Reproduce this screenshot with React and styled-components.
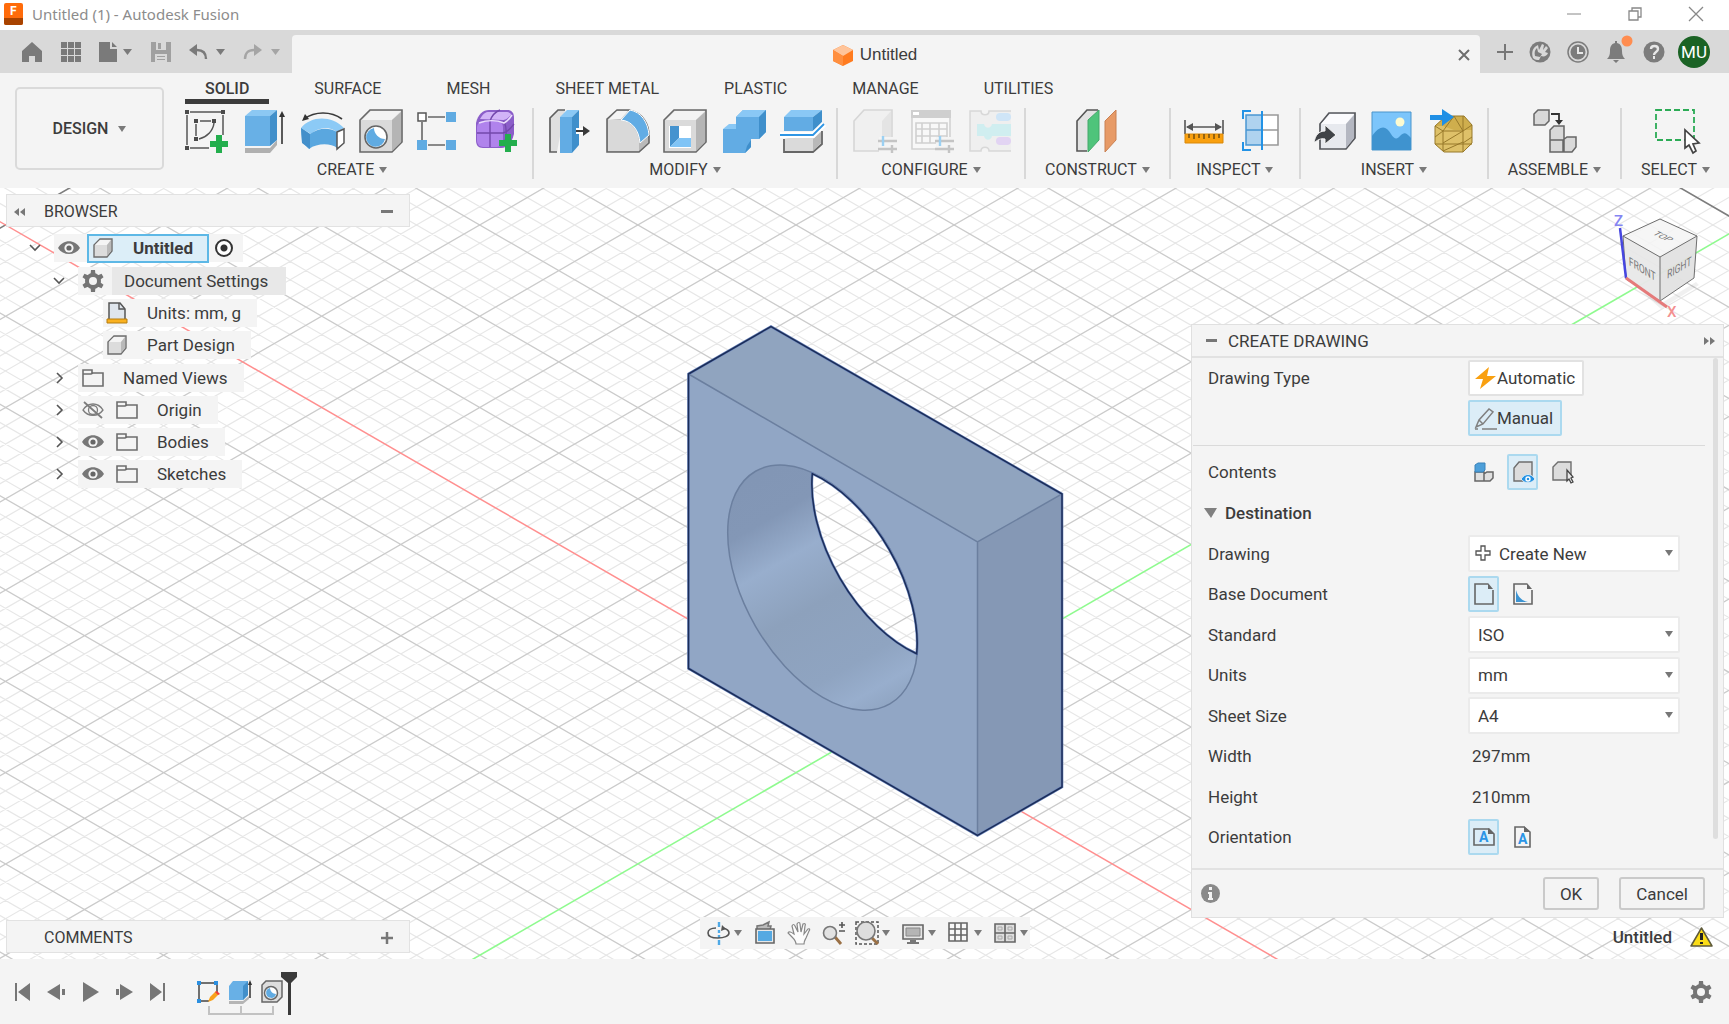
import React, { useState } from "react";
import styled, { createGlobalStyle } from "styled-components";

const GlobalStyle = createGlobalStyle`
  * {
    box-sizing: border-box;
  }
  body {
    margin: 0;
    background: #f4f4f4;
    color: #3c3c3c;
    font-family: Roboto, "Noto Sans", sans-serif;
    font-size: 17px;
  }
  button, select, input {
    font: inherit;
    color: inherit;
  }
  button {
    background: none;
    border: none;
    padding: 0;
    cursor: pointer;
  }
  ul {
    list-style: none;
    margin: 0;
    padding: 0;
  }
  svg {
    display: block;
    flex: none;
    overflow: visible;
  }
`;

const Page = styled.div`
  min-height: 100vh;
  display: flex;
  flex-direction: column;
`;

/* ---------- title bar ---------- */

const TitleBar = styled.header`
  height: 30px;
  display: flex;
  align-items: center;
  padding: 0 26px 3px 4px;
  background: white;
`;

const WindowTitle = styled.span`
  margin-left: 8px;
  flex: 1;
  font-family: "Noto Sans", sans-serif;
  font-size: 15px;
  color: #8c8c8c;
`;

const WindowButtons = styled.div`
  display: flex;
  gap: 47px;
`;

const IconButton = styled.button`
  display: flex;
  align-items: center;
  justify-content: center;
  gap: ${(props) => props.$gap || 6}px;
  color: #808080;
`;

/* ---------- document tabs ---------- */

const TabStrip = styled.div`
  height: 43px;
  display: flex;
  background: #d9d9d9;
`;

const QuickAccess = styled.div`
  width: 292px;
  padding: 0 12px 0 22px;
  display: flex;
  align-items: center;
  justify-content: space-between;
`;

const DocumentTab = styled.div`
  flex: 1;
  margin-top: 5px;
  padding: 2px 10px 0 0;
  display: flex;
  align-items: center;
  background: #f4f4f4;
  border-radius: 4px 4px 0 0;
`;

const DocumentName = styled.div`
  flex: 1;
  display: flex;
  align-items: center;
  justify-content: center;
  gap: 7px;
  font-family: "Liberation Sans", Arial, sans-serif;
  font-size: 17px;
`;

const Account = styled.div`
  padding: 0 19px 0 17px;
  display: flex;
  align-items: center;
  gap: 16px;
`;

const Avatar = styled.button`
  width: 32px;
  height: 32px;
  margin-left: -3px;
  border-radius: 50%;
  background: #1b6325;
  color: white;
  font-size: 17px;
`;

/* ---------- ribbon ---------- */

const Ribbon = styled.div`
  height: 115px;
  display: flex;
  background: #f4f4f4;
`;

const WorkspaceButton = styled.button`
  flex: none;
  width: 149px;
  height: 83px;
  margin: 14px 8px 0 15px;
  display: flex;
  align-items: center;
  justify-content: center;
  gap: 10px;
  border: 2px solid #dadada;
  border-radius: 5px;
  font-size: 16px;
  font-weight: 500;
`;

const RibbonBody = styled.div`
  flex: 1;
  min-width: 0;
`;

const RibbonTabs = styled.nav`
  height: 31px;
  padding-left: 13px;
  display: flex;
  gap: 25px;
`;

const RibbonTab = styled.button`
  padding: 4px 20px 0;
  border-bottom: 5px solid ${(props) => (props.$active ? "#3c3c3c" : "transparent")};
  font-size: 16px;
  font-weight: ${(props) => (props.$active ? 500 : 400)};
  white-space: nowrap;
`;

const Groups = styled.div`
  display: flex;
  padding-top: 4px;
`;

const Group = styled.div`
  height: 71px;
  padding: 1px 13px 0;
  display: flex;
  flex-direction: column;
  align-items: center;
  justify-content: space-between;
  border-right: 2px solid #d8d8d8;
  &:last-child {
    border-right: none;
  }
`;

const Tools = styled.div`
  display: flex;
  gap: 14px;
`;

const Tool = styled.button`
  width: 44px;
  height: 44px;
`;

const GroupLabel = styled.button`
  padding: 0 6px;
  display: flex;
  align-items: center;
  gap: 5px;
  font-size: 16px;
  line-height: 18px;
`;

/* ---------- canvas ---------- */

const Canvas = styled.main`
  position: relative;
  flex: 1;
  min-height: 770px;
  overflow: hidden;
  background: white;
`;

const Scene = styled.svg`
  position: absolute;
  inset: 0;
  width: 100%;
  height: 100%;
`;

const CubeWidget = styled.svg`
  position: absolute;
  top: 24px;
  right: 19px;
`;

const BrowserPanel = styled.section`
  position: absolute;
  top: 6px;
  left: 6px;
  width: 404px;
`;

const PanelBar = styled.div`
  height: 33px;
  padding: 2px 16px 0 7px;
  display: flex;
  align-items: center;
  background: #f4f4f4;
  border: 1px solid #e2e2e2;
  font-size: 16px;
`;

const PanelTitle = styled.span`
  flex: 1;
  margin-left: ${(props) => props.$indent || 19}px;
`;

const CommentsPanel = styled(PanelBar)`
  position: absolute;
  left: 6px;
  bottom: 6px;
  width: 404px;
`;

const Tree = styled.ul`
  padding-top: 5px;
`;

const Branch = styled.ul`
  padding: ${(props) => (props.$nested ? "0 0 1px" : "1px 0 0")};
`;

const TreeRow = styled.div`
  height: 32px;
  padding-left: ${(props) => props.$indent}px;
  display: flex;
  align-items: center;
`;

const Expander = styled.button`
  width: 12px;
  height: 20px;
  margin-right: 13px;
  display: flex;
  align-items: center;
  justify-content: center;
`;

const RowBody = styled.div`
  height: 28px;
  padding: 0 ${(props) => (props.$flush ? 0 : 16)}px 0 4px;
  display: flex;
  align-items: center;
  background: #f4f4f4;
`;

const RowLabel = styled.span`
  margin-left: ${(props) => props.$gap || 20}px;
  white-space: nowrap;
`;

const SettingsLabel = styled.span`
  height: 28px;
  margin-left: 8px;
  padding: 0 18px 0 12px;
  line-height: 28px;
  background: #e8e8e8;
`;

const RootName = styled.button`
  height: 29px;
  margin: 0 6px 0 7px;
  padding: 0 14px 0 4px;
  display: flex;
  align-items: center;
  gap: 20px;
  border: 2px solid #5db8e6;
  background: #dceef8;
  font-weight: 700;
`;

const ActiveRadio = styled.input`
  appearance: none;
  width: 18px;
  height: 18px;
  margin: 0 10px 0 0;
  border: 2px solid #333;
  border-radius: 50%;
  background: radial-gradient(circle, #333 3px, white 4px);
`;

const Gap = styled.span`
  width: ${(props) => props.$size}px;
`;

const NavBar = styled.div`
  position: absolute;
  left: 50%;
  bottom: 10px;
  transform: translateX(-50%);
  height: 32px;
  padding: 0 2px 0 8px;
  display: flex;
  align-items: center;
  gap: 12px;
  background: #f4f4f4;
`;

const DocumentStatus = styled.div`
  position: absolute;
  right: 16px;
  bottom: 12px;
  display: flex;
  align-items: center;
  gap: 18px;
  font-weight: 500;
`;

/* ---------- create drawing dialog ---------- */

const Dialog = styled.section`
  position: absolute;
  top: 136px;
  right: 5px;
  width: 533px;
  background: #f4f4f4;
  border: 1px solid #e0e0e0;
`;

const DialogHeader = styled.div`
  height: 33px;
  padding: 1px 8px 0 14px;
  display: flex;
  align-items: center;
  border-bottom: 2px solid #e2e2e2;
`;

const DialogBody = styled.div`
  display: flex;
  justify-content: space-between;
  padding: 0 5px 11px 1px;
`;

const Form = styled.form`
  width: 512px;
`;

const Scrollbar = styled.div`
  width: 5px;
  height: 481px;
  border-radius: 3px;
  background: #dedede;
`;

const TypeRow = styled.div`
  padding: 2px 0 9px 15px;
  margin-bottom: 6px;
  display: flex;
  border-bottom: 1px solid #dadada;
`;

const TypeOptions = styled.div`
  display: flex;
  flex-direction: column;
  align-items: flex-start;
  gap: 4px;
`;

const Field = styled.div`
  height: ${(props) => (props.$tall ? 41 : 40)}px;
  padding-left: 15px;
  display: flex;
  align-items: center;
`;

const FieldName = styled.label`
  width: 260px;
  line-height: 36px;
`;

const TypeButton = styled.button`
  height: 36px;
  padding: 0 7px 0 4px;
  display: flex;
  align-items: center;
  border: 2px solid ${(props) => (props.$on ? "#abd9ef" : "#e2e2e2")};
  border-radius: 2px;
  background: ${(props) => (props.$on ? "#dcedf7" : "white")};
`;

const Toggles = styled.div`
  display: flex;
  gap: 8px;
`;

const Toggle = styled.button`
  width: 31px;
  height: 36px;
  display: flex;
  align-items: center;
  justify-content: center;
  border: 2px solid ${(props) => (props.$on ? "#abd9ef" : "transparent")};
  border-radius: 2px;
  background: ${(props) => (props.$on ? "#dcedf7" : "transparent")};
`;

const SelectBox = styled.div`
  position: relative;
  width: 212px;
`;

const SelectInput = styled.select`
  appearance: none;
  width: 100%;
  height: 37px;
  padding-left: ${(props) => (props.$withIcon ? 29 : 8)}px;
  border: 2px solid #ebebeb;
  border-radius: 2px;
  background: white;
`;

const SelectIcon = styled.span`
  position: absolute;
  top: 10px;
  left: 7px;
  pointer-events: none;
`;

const SelectArrow = styled.span`
  position: absolute;
  top: 15px;
  right: 7px;
  pointer-events: none;
`;

const SectionToggle = styled.button`
  height: 41px;
  padding-left: 11px;
  display: flex;
  align-items: center;
  gap: 8px;
  font-weight: 500;
`;

const ReadOnly = styled.span`
  padding-left: 4px;
`;

const DialogFooter = styled.div`
  height: 49px;
  padding: 0 18px 0 9px;
  display: flex;
  align-items: center;
  gap: 20px;
  border-top: 2px solid #e2e2e2;
`;

const FooterFill = styled.span`
  flex: 1;
`;

const DialogButton = styled.button`
  height: 33px;
  padding: 0 15px;
  border: 2px solid #cacaca;
  border-radius: 3px;
`;

/* ---------- timeline ---------- */

const Timeline = styled.footer`
  height: 65px;
  padding: 0 17px 0 14px;
  display: flex;
  align-items: center;
  background: #f4f4f4;
`;

const Playback = styled.div`
  display: flex;
  gap: 16px;
  margin-right: 29px;
`;

const Features = styled.div`
  flex: 1;
`;

/* ---------- icons ---------- */

const Svg = ({ w, h, children, ...rest }) => (
  <svg width={w} height={h || w} viewBox={`0 0 ${w} ${h || w}`} fill="none" aria-hidden="true" {...rest}>
    {children}
  </svg>
);

const Caret = ({ w = 10, color = "#7a7a7a" }) => (
  <Svg w={w} h={6}>
    <path d={`M0 0H${w}L${w / 2} 6Z`} fill={color} />
  </Svg>
);

const PlusBadge = ({ x, y }) => (
  <path d={`M${x - 3} ${y - 9}h6v6h6v6h-6v6h-6v-6h-6v-6h6z`} fill="#23ae4d" />
);

const SmallCube = ({ w = 20 }) => (
  <svg width={w} height={w} viewBox="0 0 20 20" fill="none" aria-hidden="true">
    <path d="M1 19V7l6-6h12v12l-5 6z" fill="#dcdcdc" stroke="#6e6e6e" strokeWidth="1.4" />
    <path d="M7 2h11l-4 5H2z" fill="#f4f4f4" />
    <path d="M18 2v11l-4 5V7z" fill="#b9b9b9" />
  </svg>
);

const Folder = () => (
  <Svg w={22} h={18}>
    <path d="M1 17V1h9v3h11v13z" stroke="#6e6e6e" strokeWidth="1.6" />
    <path d="M1 5h8l2-1" stroke="#6e6e6e" strokeWidth="1.4" />
  </Svg>
);

const Eye = ({ off }) => (
  <Svg w={22} h={16}>
    {off ? (
      <g stroke="#7c7c7c" strokeWidth="1.3">
        <path d="M1 8c5-8 15-8 20 0-5 7-15 7-20 0z" />
        <circle cx="11" cy="8" r="4.5" />
        <path d="M2 0l18 16" strokeWidth="1.8" />
      </g>
    ) : (
      <>
        <path d="M0 8c5-9 17-9 22 0-5 8-17 8-22 0z" fill="#777" />
        <circle cx="11" cy="8" r="4.6" fill="#f4f4f4" />
        <circle cx="11" cy="8" r="2.6" fill="#666" />
      </>
    )}
  </Svg>
);

const Gear = ({ w = 22 }) => (
  <svg width={w} height={w} viewBox="0 0 22 22" aria-hidden="true">
    {[0, 60, 120].map((a) => (
      <path key={a} d="M8.500 5L9 0h4l.5 5v12L13 22H9l-.5-5z" fill="#757575" transform={`rotate(${a} 11 11)`} />
    ))}
    <circle cx="11" cy="11" r="8" fill="#757575" />
    <circle cx="11" cy="11" r="4" fill="#f4f4f4" />
  </svg>
);

const Chevron = ({ open }) => (
  <Svg w={10}>
    <path d={open ? "M0 2l5 5 5-5" : "M3 0l5 5-5 5"} stroke="#555" strokeWidth="1.6" />
  </Svg>
);

const SketchIcon = () => (
  <Svg w={44}>
    <path d="M5 3h31M38 6v20M2 6v30M5 39h19M11 15v12M15 12h11M29 14c-1 8-7 14-15 16" stroke="#555" strokeWidth="1.5" />
    <path d="M0 1h4v4H0zM36 1h4v4h-4zM0 37h4v4H0zM9 10h4v4H9zM27 10h4v4h-4zM9 28h4v4H9z" fill="#4b4b4b" />
    <PlusBadge x={34} y={35} />
  </Svg>
);

const ExtrudeIcon = () => (
  <Svg w={44}>
    <path d="M2 39h25l7-8v5l-7 8H2z" fill="#b0b0b0" />
    <path d="M2 37V7h25v30z" fill="#68b0e6" />
    <path d="M2 7l7-6h25l-7 6z" fill="#8cc8f3" />
    <path d="M27 7l7-6v30l-7 6z" fill="#418fca" />
    <path d="M39 35V4" stroke="#333" strokeWidth="1.6" />
    <path d="M39 2l3 6h-6z" fill="#333" />
  </Svg>
);

const RevolveIcon = () => (
  <Svg w={44}>
    <path d="M0 19C10 7 30 6 43 19l-7 4c-8-6-18-5-26 2z" fill="#8ccaf6" />
    <path d="M0 19l9 6c9-6 18-7 27-2v16c-6-5-20-5-28 1L1 33z" fill="#5aa7df" />
    <path d="M0 19l9 6v15l-8-6z" fill="#438fca" />
    <path d="M36 23l7-3v14l-7 6z" fill="white" stroke="#555" strokeWidth="1.5" />
    <path d="M3 10C14 2 30 2 41 10" stroke="#3a3a3a" strokeWidth="1.7" />
    <path d="M1 12l3-7 4 5z" fill="#333" />
  </Svg>
);

const GrayCube = ({ stroke = "#686868" }) => (
  <>
    <path d="M1 43V11L11 1h32v32L33 43z" fill="#dadada" stroke={stroke} strokeWidth="1.6" />
    <path d="M12 2h30l-9 9H3z" fill="#f3f3f3" />
    <path d="M42 3v30l-9 9V11z" fill="#b5b5b5" />
  </>
);

const HoleIcon = () => (
  <Svg w={44}>
    <GrayCube />
    <circle cx="17" cy="28" r="11" fill="white" stroke="#666" strokeWidth="1.6" />
    <path d="M15 19a9.500 9.500 0 1 0 11 11c-6 0-11-5-11-11z" fill="#60abe2" />
  </Svg>
);

const PatternIcon = () => (
  <Svg w={44}>
    <path d="M11 8h17M5 13v18M11 36h17" stroke="#666" strokeWidth="1.6" />
    <path d="M1 4h8v8H1z" fill="white" stroke="#555" strokeWidth="1.5" />
    <path d="M29 3h10v10H29zM0 31h10v10H0zM29 31h10v10H29z" fill="#60abe2" />
  </Svg>
);

const FormIcon = () => (
  <Svg w={44}>
    <path d="M1 14C3 5 8 1 14 1h18c5 0 7 3 7 8v16c-2 9-7 14-13 14H8c-5 0-7-3-7-8z" fill="#8b5ec9" />
    <rect x="2" y="12" width="26" height="26" rx="6" fill="#b083ec" />
    <path d="M5 10C9 3 11 3 16 3h15c3 0 5 1 5 3-4 4-6 5-8 5z" fill="#d1b3f7" />
    <path d="M15 12v26M2 24h26c5-1 8-5 11-9M15 12c2-6 5-9 10-11M29 12c3 7 3 15 0 24" stroke="#7348ab" strokeWidth="1.4" />
    <path d="M4 14c8-3 18-3 25 0 4-2 6-5 8-8" stroke="#eadcfc" strokeWidth="1.6" />
    <PlusBadge x={33} y={34} />
  </Svg>
);

const PressPullIcon = () => (
  <Svg w={44}>
    <path d="M10 43H3V9l8-8h7" fill="#dfdfdf" stroke="#5f5f5f" strokeWidth="1.7" />
    <path d="M13 8h12v36H13z" fill="#62ace4" />
    <path d="M13 8l7-7h12l-7 7z" fill="#8ac8f5" />
    <path d="M25 8l7-7v35l-7 8z" fill="#3f8fcb" />
    <path d="M29 22h9" stroke="white" strokeWidth="6" />
    <path d="M29 22h10" stroke="#3a3a3a" strokeWidth="2" />
    <path d="M36 17l7 5-7 5z" fill="#3a3a3a" />
  </Svg>
);

const FilletIcon = () => (
  <Svg w={44}>
    <path d="M2 43V10l10-9h12c14 3 20 14 20 26v7l-10 9z" fill="#b9b9b9" stroke="#666" strokeWidth="1.6" />
    <path d="M3 42V11h12c11 1 18 10 19 21v10z" fill="#d9d9d9" />
    <path d="M3 11l9-9h11l-7 8z" fill="#f4f4f4" />
    <path d="M16 11l9-10c11 2 18 12 19 25l-9 8C34 21 27 12 16 11z" fill="#62ace4" stroke="white" />
  </Svg>
);

const ShellIcon = () => (
  <Svg w={44}>
    <GrayCube />
    <path d="M6 17h22v22H6z" fill="white" />
    <path d="M7 17h9v12l-9 9z" fill="#4593cf" />
    <path d="M16 29h12v9H7z" fill="#80c4f6" />
  </Svg>
);

const CombineIcon = () => (
  <Svg w={44}>
    <path d="M2 20h13V8l7-7h23v22l-7 7h-8v8l-6 6H2z" fill="#62ace4" />
    <path d="M15 8l7-7h23l-7 7zM2 20l6-5h7v5z" fill="#8ac8f5" />
    <path d="M38 8l7-7v22l-7 7zM26 37l4-6v7l-6 6z" fill="#3f8fcb" />
  </Svg>
);

const SplitIcon = () => (
  <Svg w={44}>
    <path d="M5 8h29v14H5z" fill="#62ace4" />
    <path d="M5 8l7-7h31l-9 7z" fill="#8ac8f5" />
    <path d="M34 8l9-7v13l-9 8z" fill="#3f8fcb" />
    <path d="M5 30v13h29l9-8V22" fill="#dadada" stroke="#666" strokeWidth="1.8" />
    <path d="M34 30l8-7v11l-8 8z" fill="#b9b9b9" />
    <path d="M1 26h33L45 15" stroke="white" strokeWidth="6" />
    <path d="M1 26h33L45 15" stroke="#2f96e4" strokeWidth="1.800" />
  </Svg>
);

const Sliders = ({ x, y }) => (
  <g strokeWidth="2.4" stroke="#c4c4c4">
    <path d={`M${x} ${y}h19M${x} ${y + 8}h19M${x + 14} ${y + 4}v8`} />
    <path d={`M${x + 5} ${y - 5}v10`} stroke="#9bd0f2" />
  </g>
);

const ConfigureIcon = () => (
  <Svg w={44}>
    <path d="M29 42H3V12L13 1h28v27" fill="#f0f0f0" stroke="#d6d6d6" strokeWidth="1.6" />
    <path d="M40 2v26l-9 4V12z" fill="#e4e4e4" />
    <path d="M28 28h18v15H28z" fill="#f4f4f4" />
    <Sliders x={27} y={32} />
  </Svg>
);

const ConfigTableIcon = () => (
  <Svg w={44}>
    <path d="M3 2h38v38H3z" fill="#f8f8f8" stroke="#d2d2d2" strokeWidth="1.6" />
    <path d="M2 1h40v8H2z" fill="#cfcfcf" />
    <path d="M4 3h6v3H4z" fill="white" />
    <path d="M7 14h31v20H7zM7 20h31M7 27h31M13 14v20M21 14v20M30 14v20" stroke="#d0d0d0" strokeWidth="1.6" />
    <path d="M27 28h18v15H27z" fill="#f4f4f4" />
    <Sliders x={26} y={32} />
  </Svg>
);

const ConfigRulesIcon = () => (
  <Svg w={44}>
    <path d="M44 2H22c0 5-8 5-8 0H3v40h11c0-5 8-5 8 0h22" fill="#efefef" stroke="#d8d8d8" strokeWidth="1.5" />
    <path d="M10 15h7c1 5 7 5 8 0h19v12H25c-1 5-7 5-8 0h-7z" fill="#d0eef0" />
    <rect x="29" y="4" width="15" height="8" rx="4" fill="#cfe5f7" />
    <rect x="29" y="28" width="15" height="8" rx="4" fill="#e2d4f3" />
  </Svg>
);

const PlaneIcon = () => (
  <Svg w={44}>
    <path d="M12 42H2V12L12 1h11" fill="#e3e3e3" stroke="#555" strokeWidth="1.6" />
    <path d="M13 11L24 1v30L13 43z" fill="#4fc47b" stroke="#45a86b" />
    <path d="M30 12L41 1v30L30 43z" fill="#e79a66" stroke="#c98052" />
  </Svg>
);

const MeasureIcon = () => (
  <Svg w={44}>
    <path d="M1 11v14M39 11v14M3 18h34" stroke="#555" strokeWidth="1.6" />
    <path d="M2 18l7-4v8zM38 18l-7-4v8z" fill="#555" />
    <path d="M1 25h38v9H1z" fill="#f9a00f" stroke="#d98808" />
    <path d="M5 25v4M10 25v5M15 25v4M20 25v5M25 25v4M30 25v5M35 25v4" stroke="#6d4a10" strokeWidth="1.4" />
  </Svg>
);

const SectionIcon = () => (
  <Svg w={44}>
    <path d="M4 6h15v30H4z" fill="#afd3ef" />
    <path d="M21 6h15v30H21M21 21h15" fill="white" stroke="#999" strokeWidth="1.6" />
    <path d="M19 6H4v30h15M4 21h15" stroke="#4a97d2" strokeWidth="1.5" />
    <path d="M20 2v39M9 2H1v8M9 41H1v-8" stroke="#2393e6" strokeWidth="2" />
  </Svg>
);

const InsertIcon = () => (
  <Svg w={44}>
    <path d="M6 40V15L15 4h26v25l-9 11z" fill="#e7e9ee" stroke="#55575c" strokeWidth="1.7" />
    <path d="M16 5h24l-8 10H7z" fill="#fbfbfd" />
    <path d="M40 6v23l-8 10V15z" fill="#b4b7c1" />
    <path d="M0 34c1-8 5-12 11-12v-6l11 10-11 9v-5c-4-1-8 1-11 4z" fill="#404347" stroke="#f4f4f4" />
  </Svg>
);

const CanvasIcon = () => (
  <Svg w={44}>
    <path d="M0 3h39v38H0z" fill="#7cc5fb" stroke="#4b95cc" />
    <path d="M0 27c8-11 14-11 19-2 3 5 6 6 9 2 4-4 6-4 11 2v12H0z" fill="#3f93cf" />
    <circle cx="28" cy="13" r="4.500" fill="#fdfbd0" />
  </Svg>
);

const MeshIcon = () => (
  <Svg w={44}>
    <path d="M5 17l11-10h18l8 9v18l-9 9H14l-9-8z" fill="#cfae4d" />
    <path d="M5 17h8l11 4h18v14l-9 8H14l-9-8z" fill="#dec169" />
    <path d="M5 17l8 5h20l9-6M13 22v20M33 22v21M5 35h37M13 34l20-12M13 42l20-9M33 22L24 7 13 22M33 7v15M5 28l8-6M42 28l-9 6M5 17l11-10h18l8 9v18l-9 9H14l-9-8z" stroke="#97792a" strokeWidth="1" />
    <path d="M0 6h12V0l12 8-12 9v-6H0z" fill="#1f8fe5" />
  </Svg>
);

const AssembleIcon = () => (
  <Svg w={44}>
    <g fill="#d9d9d9" stroke="#666" strokeWidth="1.5">
      <path d="M2 16V5l4-4h11v11l-4 4z" />
      <path d="M18 30V21l4-4h10v26H18zM31 43V31l4-3h9v10l-4 5zM18 31h13v12H18z" />
    </g>
    <path d="M19 5h8v7" stroke="#333" strokeWidth="1.8" />
    <path d="M27 16l-4-5h8z" fill="#333" />
  </Svg>
);

const SelectToolIcon = () => (
  <Svg w={44}>
    <path d="M2 1h38v30H2z" stroke="#2bab55" strokeWidth="1.800" strokeDasharray="6 3" />
    <path d="M31 21v18l4-3 4 8 3-2-3-7 6-1z" fill="white" stroke="#444" strokeWidth="1.7" />
  </Svg>
);

const ribbonGroups = [
  {
    label: "CREATE",
    tools: [
      ["Create Sketch", SketchIcon],
      ["Extrude", ExtrudeIcon],
      ["Revolve", RevolveIcon],
      ["Hole", HoleIcon],
      ["Rectangular Pattern", PatternIcon],
      ["Create Form", FormIcon],
    ],
  },
  {
    label: "MODIFY",
    tools: [
      ["Press Pull", PressPullIcon],
      ["Fillet", FilletIcon],
      ["Shell", ShellIcon],
      ["Combine", CombineIcon],
      ["Split Body", SplitIcon],
    ],
  },
  {
    label: "CONFIGURE",
    tools: [
      ["Configure", ConfigureIcon],
      ["Configuration Table", ConfigTableIcon],
      ["Configuration Rules", ConfigRulesIcon],
    ],
  },
  { label: "CONSTRUCT", tools: [["Offset Plane", PlaneIcon]] },
  {
    label: "INSPECT",
    tools: [
      ["Measure", MeasureIcon],
      ["Section Analysis", SectionIcon],
    ],
  },
  {
    label: "INSERT",
    tools: [
      ["Insert Derive", InsertIcon],
      ["Canvas", CanvasIcon],
      ["Insert Mesh", MeshIcon],
    ],
  },
  { label: "ASSEMBLE", tools: [["New Component", AssembleIcon]] },
  { label: "SELECT", tools: [["Select", SelectToolIcon]] },
];

const ribbonTabs = ["SOLID", "SURFACE", "MESH", "SHEET METAL", "PLASTIC", "MANAGE", "UTILITIES"];

/* ---------- viewport drawing ---------- */

const ORIGIN = { x: 875, y: 727 };
const SLOPE = 0.5774;
const STEP = 18.256;

const gridLine = (offset, dir) => {
  const y = (x) => ORIGIN.y + offset * STEP + dir * SLOPE * (x - ORIGIN.x);
  return `M-20 ${y(-20).toFixed(1)}L1750 ${y(1750).toFixed(1)}`;
};

const range = Array.from({ length: 111 }, (_, i) => i - 55);
const minorPath = range
  .filter((n) => n % 5 !== 0)
  .map((n) => gridLine(n, 1) + gridLine(n, -1))
  .join("");
const majorPath = range
  .filter((n) => n % 5 === 0 && Math.abs(n) !== 55 && n !== 0)
  .map((n) => gridLine(n, 1) + gridLine(n, -1))
  .join("");

const windowPath =
  "M812.300 473.600A134.350 77.570 60 0 0 916.700 653.800A134.350 77.570 60 0 0 812.300 473.600Z";
const outline = "M688.500 374L771 326.500L1062 494V787L977.500 835.500L688.500 668.500Z";

const Viewport = () => (
  <Scene viewBox="0 188 1729 771" preserveAspectRatio="xMidYMid slice" fill="none" aria-label="Model view">
    <defs>
      <linearGradient
        id="wall"
        gradientUnits="userSpaceOnUse"
        x1="745"
        y1="483"
        x2="880"
        y2="717"
        gradientTransform="rotate(-60 822.700 587.600)"
      >
        <stop offset="0" stopColor="#8296b5" />
        <stop offset="0.16" stopColor="#8397b6" />
        <stop offset="0.32" stopColor="#98aecd" />
        <stop offset="0.52" stopColor="#8da1bc" />
        <stop offset="0.78" stopColor="#8fa4c1" />
        <stop offset="0.9" stopColor="#98aecd" />
        <stop offset="1" stopColor="#8ea3c0" />
      </linearGradient>
      <clipPath id="body">
        <path d={outline + windowPath} clipRule="evenodd" />
      </clipPath>
    </defs>
    <path d={minorPath} stroke="#e7e7e7" strokeWidth="1.2" />
    <path d={majorPath} stroke="#cbcbcb" strokeWidth="1.3" />
    <path d={gridLine(-55, 1) + gridLine(-55, -1)} stroke="#7d7d7d" strokeWidth="1.6" />
    <path d={gridLine(0, 1)} stroke="#ff8f8f" strokeWidth="1.5" />
    <path d={gridLine(0, -1)} stroke="#8ffa8f" strokeWidth="1.6" />
    <g clipPath="url(#body)">
      <path d={outline} fill="#91a6c5" />
      <path d="M688.500 374L771 326.500L1062 494L977.500 542Z" fill="#90a4bf" />
      <path d="M977.500 542L1062 494V787L977.500 835.500Z" fill="#8598b5" />
      <path d="M688.500 374L977.500 542L1062 494M977.500 542V835" stroke="#6b7f9f" strokeWidth="1.5" />
      <ellipse
        cx="822.700"
        cy="587.600"
        rx="134.350"
        ry="77.570"
        transform="rotate(60 822.700 587.600)"
        fill="url(#wall)"
        stroke="#6b7f9f"
        strokeWidth="1.5"
      />
    </g>
    <path d={outline + windowPath} stroke="#6c86bd" strokeWidth="2.6" />
    <path d={outline + windowPath} stroke="#1b2d58" strokeWidth="1.5" />
  </Scene>
);

const ViewCube = () => (
  <CubeWidget width="96" height="108" viewBox="1614 212 96 108" fill="none" aria-label="View cube">
    <path d="M1632 283l28 21 36-22 3 3-38 24z" fill="#000" opacity="0.06" />
    <path d="M1660 219L1697 236L1694 278L1660 301L1626 279L1623 236Z" fill="#f4f4f4" fillOpacity="0.85" />
    <path d="M1660 257L1697 236L1694 278L1660 301Z" fill="#dcdcdc" fillOpacity="0.7" />
    <path d="M1660 257L1623 236L1626 279L1660 301Z" fill="#e4e4e4" fillOpacity="0.7" />
    <path d="M1660 219L1697 236L1694 278L1660 301L1626 279L1623 236ZM1623 236L1660 257L1697 236M1660 257V301" stroke="#6e6e6e" />
    <path d="M1620 228L1626 278" stroke="#4646e0" strokeWidth="2.5" />
    <path d="M1626 278L1667 307" stroke="#e57a7a" strokeWidth="3" />
    <g fontFamily="Roboto, sans-serif" fontSize="10" fill="#777">
      <text transform="matrix(0.85 0.52 0.04 1.2 1629 265)">FRONT</text>
      <text transform="matrix(0.85 -0.5 -0.04 1.2 1667 279)">RIGHT</text>
      <text transform="matrix(0.86 0.42 -0.86 0.42 1652 234)">TOP</text>
    </g>
    <g fontFamily="Roboto, sans-serif" fontSize="15" fontWeight="500">
      <text x="1614" y="226" fill="#8585f2">Z</text>
      <text x="1667" y="317" fill="#f39090">X</text>
    </g>
  </CubeWidget>
);

/* ---------- parts ---------- */

const DropDown = ({ id, options, icon }) => (
  <SelectBox>
    <SelectInput id={id} $withIcon={Boolean(icon)}>
      {options.map((o) => (
        <option key={o}>{o}</option>
      ))}
    </SelectInput>
    {icon && <SelectIcon>{icon}</SelectIcon>}
    <SelectArrow>
      <Caret w={8} color="#777" />
    </SelectArrow>
  </SelectBox>
);

const ToggleGroup = ({ label, initial, items }) => {
  const [selected, setSelected] = useState(initial);
  return (
    <Toggles role="group" aria-labelledby={label}>
      {items.map(([name, icon], i) => (
        <Toggle
          key={name}
          type="button"
          aria-label={name}
          aria-pressed={selected === i}
          $on={selected === i}
          onClick={() => setSelected(i)}
        >
          {icon}
        </Toggle>
      ))}
    </Toggles>
  );
};

const Sheet = ({ curve }) => (
  <Svg w={20} h={22}>
    <path d="M14 1H1v20h18V7" stroke="#666" strokeWidth="1.600" />
    <path d="M14 0v6h5z" fill="#666" />
    {curve && <path d="M3 7c2 7 6 11 12 12H3z" fill="#3d94d2" />}
  </Svg>
);

const Landscape = () => (
  <Svg w={22} h={18}>
    <path d="M1 1h15l5 5v11H1z" stroke="#666" strokeWidth="1.600" />
    <path d="M15 0v6h6z" fill="#666" />
    <text x="6" y="14" fontSize="14" fontWeight="700" fill="#2b95e6">A</text>
  </Svg>
);

const Portrait = () => (
  <Svg w={17} h={22}>
    <path d="M1 1h9l6 5v15H1z" stroke="#666" strokeWidth="1.600" />
    <path d="M10 0v6h6z" fill="#666" />
    <text x="4" y="18" fontSize="14" fontWeight="700" fill="#2b95e6">A</text>
  </Svg>
);

const CreateDrawing = () => {
  const [type, setType] = useState("Manual");
  return (
    <Dialog aria-label="Create drawing">
      <DialogHeader>
        <IconButton aria-label="Collapse">
          <Svg w={12} h={4}><path d="M0 0h11v3H0z" fill="#777" /></Svg>
        </IconButton>
        <PanelTitle $indent={10}>CREATE DRAWING</PanelTitle>
        <IconButton aria-label="Dock">
          <Svg w={11} h={8}><path d="M0 0l5 4-5 4zM6 0l5 4-5 4z" fill="#777" /></Svg>
        </IconButton>
      </DialogHeader>
      <DialogBody>
        <Form onSubmit={(e) => e.preventDefault()}>
          <TypeRow>
            <FieldName as="span">Drawing Type</FieldName>
            <TypeOptions>
              <TypeButton type="button" $on={type === "Automatic"} onClick={() => setType("Automatic")}>
                <Svg w={23}><path d="M15 0L1 12h8L6 22 22 9h-9z" fill="#f9a010" /></Svg>
                Automatic
              </TypeButton>
              <TypeButton type="button" $on={type === "Manual"} onClick={() => setType("Manual")}>
                <Svg w={23}>
                  <path d="M2 20l3-7L15 2l4 3L9 17zM5 13l4 4M1 22h3M8 22h15" stroke="#808080" strokeWidth="1.5" />
                </Svg>
                Manual
              </TypeButton>
            </TypeOptions>
          </TypeRow>
          <Field>
            <FieldName as="span" id="contents">Contents</FieldName>
            <ToggleGroup
              label="contents"
              initial={1}
              items={[
                ["Full Assembly", (
                  <Svg w={20}>
                    <path d="M1 10h9v9H1zM10 19v-7l3-2h6v6l-3 3z" fill="#e0e0e0" stroke="#666" strokeWidth="1.5" />
                    <path d="M1 10V3l3-2h7v7l-2 2z" fill="#4d9fd9" stroke="#3b83ba" />
                  </Svg>
                )],
                ["Visible Only", (
                  <Svg w={20} h={22}>
                    <path d="M1 20V7l5-6h13v14l-5 5z" fill="#dcdcdc" stroke="#6e6e6e" strokeWidth="1.4" />
                    <path d="M8 18c4-6 10-6 14 0-4 5-10 5-14 0z" fill="#2492e3" stroke="#dcedf7" />
                    <circle cx="15" cy="18" r="2" stroke="white" strokeWidth="1.4" />
                  </Svg>
                )],
                ["Select", (
                  <Svg w={20} h={22}>
                    <path d="M1 19V6l5-5h13v13l-4 5z" fill="#dcdcdc" stroke="#6e6e6e" strokeWidth="1.4" />
                    <path d="M15 9v11l2-2 2 4 2-1-2-4 2-1z" fill="#e8e8e8" stroke="#444" strokeWidth="1.3" />
                  </Svg>
                )],
              ]}
            />
          </Field>
          <SectionToggle type="button">
            <Svg w={13} h={10}><path d="M0 0h13L7 10z" fill="#808080" /></Svg>
            Destination
          </SectionToggle>
          <Field $tall>
            <FieldName htmlFor="drawing">Drawing</FieldName>
            <DropDown
              id="drawing"
              options={["Create New"]}
              icon={
                <Svg w={16}>
                  <path d="M6 1h4v5h5v4h-5v5H6v-5H1V6h5z" stroke="#555" strokeWidth="1.3" />
                </Svg>
              }
            />
          </Field>
          <Field>
            <FieldName as="span" id="base">Base Document</FieldName>
            <ToggleGroup label="base" initial={0} items={[["Blank", <Sheet />], ["From Template", <Sheet curve />]]} />
          </Field>
          <Field $tall>
            <FieldName htmlFor="standard">Standard</FieldName>
            <DropDown id="standard" options={["ISO", "ASME"]} />
          </Field>
          <Field>
            <FieldName htmlFor="units">Units</FieldName>
            <DropDown id="units" options={["mm", "in"]} />
          </Field>
          <Field $tall>
            <FieldName htmlFor="sheet">Sheet Size</FieldName>
            <DropDown id="sheet" options={["A4", "A3", "A2"]} />
          </Field>
          <Field>
            <FieldName as="span">Width</FieldName>
            <ReadOnly>297mm</ReadOnly>
          </Field>
          <Field $tall>
            <FieldName as="span">Height</FieldName>
            <ReadOnly>210mm</ReadOnly>
          </Field>
          <Field>
            <FieldName as="span" id="orientation">Orientation</FieldName>
            <ToggleGroup label="orientation" initial={0} items={[["Landscape", <Landscape />], ["Portrait", <Portrait />]]} />
          </Field>
        </Form>
        <Scrollbar />
      </DialogBody>
      <DialogFooter>
        <IconButton aria-label="Info">
          <Svg w={19}>
            <circle cx="9.500" cy="9.500" r="9.500" fill="#8a8a8a" />
            <path d="M8 3h3v3H8zM7 8h4v6h1v2H7v-2h1v-4H7z" fill="#f4f4f4" />
          </Svg>
        </IconButton>
        <FooterFill />
        <DialogButton>OK</DialogButton>
        <DialogButton>Cancel</DialogButton>
      </DialogFooter>
    </Dialog>
  );
};

const BrowserTree = () => (
  <BrowserPanel>
    <PanelBar>
      <IconButton aria-label="Dock">
        <Svg w={11} h={8}><path d="M5 0L0 4l5 4zM11 0L6 4l5 4z" fill="#777" /></Svg>
      </IconButton>
      <PanelTitle>BROWSER</PanelTitle>
      <IconButton aria-label="Collapse">
        <Svg w={12} h={4}><path d="M0 0h12v3H0z" fill="#777" /></Svg>
      </IconButton>
    </PanelBar>
    <Tree>
      <li>
        <TreeRow $indent={23}>
          <Expander aria-label="Collapse"><Chevron open /></Expander>
          <RowBody $flush>
            <Eye />
            <RootName><SmallCube />Untitled</RootName>
            <ActiveRadio type="radio" name="active" aria-label="Activate component" defaultChecked />
          </RowBody>
        </TreeRow>
        <Branch>
          <li>
            <TreeRow $indent={47}>
              <Expander aria-label="Collapse"><Chevron open /></Expander>
              <RowBody $flush>
                <Gear />
                <SettingsLabel>Document Settings</SettingsLabel>
              </RowBody>
            </TreeRow>
            <Branch $nested>
              <li>
                <TreeRow $indent={97}>
                  <RowBody>
                    <Svg w={20} h={22}>
                      <path d="M2 17V1h11l5 6v10" fill="#dfe5ec" stroke="#555" strokeWidth="1.5" />
                      <path d="M12 1v6h6" stroke="#555" strokeWidth="1.4" />
                      <path d="M0 17h20v4H0z" fill="#fab11f" stroke="#b57c10" />
                    </Svg>
                    <RowLabel>Units: mm, g</RowLabel>
                  </RowBody>
                </TreeRow>
              </li>
              <li>
                <TreeRow $indent={97}>
                  <RowBody>
                    <SmallCube />
                    <RowLabel>Part Design</RowLabel>
                  </RowBody>
                </TreeRow>
              </li>
            </Branch>
          </li>
          <li>
            <TreeRow $indent={47}>
              <Expander aria-label="Expand"><Chevron /></Expander>
              <RowBody>
                <Folder />
                <RowLabel $gap={19}>Named Views</RowLabel>
              </RowBody>
            </TreeRow>
          </li>
          {["Origin", "Bodies", "Sketches"].map((name) => (
            <li key={name}>
              <TreeRow $indent={47}>
                <Expander aria-label="Expand"><Chevron /></Expander>
                <RowBody>
                  <Eye off={name === "Origin"} />
                  <Gap $size={12} />
                  <Folder />
                  <RowLabel $gap={19}>{name}</RowLabel>
                </RowBody>
              </TreeRow>
            </li>
          ))}
        </Branch>
      </li>
    </Tree>
  </BrowserPanel>
);

const navItems = [
  ["Orbit", true, (
    <>
      <path d="M11 0v5M11 8v3M11 13v3M11 18v5" stroke="#4fa9e6" strokeWidth="2.4" />
      <path d="M8 6C3 6 0 8 0 11s4 5 10 5 11-2 11-5-2-4-6-5" stroke="#555" strokeWidth="1.6" />
      <path d="M14 3l-1 6 5-2z" fill="#555" />
    </>
  )],
  ["Look At", false, (
    <>
      <path d="M3 8V4l6-1 6-3-1 4h3l-1 4" stroke="#777" strokeWidth="1.5" fill="#bbb" />
      <path d="M2 7h18v14H2z" fill="#e8e8e8" stroke="#666" strokeWidth="1.6" />
      <path d="M4 9h14v10H4z" fill="#55a9e2" />
    </>
  )],
  ["Pan", false, (
    <path d="M8 22c0-3-2-5-4-7l-4-4c1-2 3-1 6 1L4 4c1-2 2-2 3 0l3 6-1-8c1-2 3-2 3 0l1 8 2-8c2-1 3 0 2 2l-1 8 4-5c2-1 2 1 1 2l-3 7c-1 2-2 3-2 6z" fill="#fcfcfc" stroke="#888" strokeWidth="1.200" />
  )],
  ["Zoom", false, (
    <>
      <path d="M13 15l6 7" stroke="#9a7045" strokeWidth="3" />
      <circle cx="8" cy="11" r="6.500" fill="#e2e2e2" stroke="#777" strokeWidth="1.6" />
      <path d="M17 3h6M20 0v6M17 9h6" stroke="#555" strokeWidth="1.6" />
    </>
  )],
  ["Fit", true, (
    <>
      <path d="M0 0h22v22H0z" stroke="#555" strokeWidth="1.500" strokeDasharray="3 2" />
      <path d="M16 16l6 6" stroke="#9a7045" strokeWidth="3" />
      <circle cx="10" cy="9" r="9" fill="#dedede" stroke="#777" strokeWidth="1.6" />
    </>
  )],
  ["Display Settings", true, (
    <>
      <path d="M1 3h20v14H1z" fill="#e6e6e6" stroke="#666" strokeWidth="1.600" />
      <path d="M4 6h14v8H4z" fill="#b5b5b5" stroke="#888" />
      <path d="M8 18h6v2h3v2H5v-2h3z" fill="#777" />
    </>
  )],
  ["Grid and Snaps", true, (
    <path d="M1 1h18v18H1zM7 1v18M13 1v18M1 7h18M1 13h18" fill="#f8f8f8" stroke="#666" strokeWidth="1.600" />
  )],
  ["Viewports", true, (
    <>
      <path d="M1 2h20v18H1z" fill="#ddd" stroke="#666" strokeWidth="1.600" />
      <path d="M11 2v18M1 11h20" stroke="#666" strokeWidth="1.600" />
      <path d="M4 5h4v3H4zM14 5h4v3h-4zM4 14h4v3H4zM14 14h4v3h-4z" stroke="#aaa" />
    </>
  )],
];

const playback = [
  ["Go to start", "M1 0h2v18H1zM16 0v18L4 9z"],
  ["Step back", "M12 1v16L-1 9zM14 6h3v6h-3z"],
  ["Play", "M1-1l16 10L1 19z"],
  ["Step forward", "M0 6h3v6H0zM4 1v16l13-8z"],
  ["Go to end", "M0 0l12 9L0 18zM13 0h2v18h-2z"],
];

const App = () => (
  <Page>
    <GlobalStyle />
    <TitleBar>
      <Svg w={20} h={22}>
        <rect width="19" height="22" rx="2" fill="#ff6b0a" />
        <path d="M0 15h19v5a2 2 0 0 1-2 2H2a2 2 0 0 1-2-2z" fill="#a84300" />
        <text x="6" y="12" fontSize="12" fontWeight="700" fill="white">F</text>
      </Svg>
      <WindowTitle>Untitled (1) - Autodesk Fusion</WindowTitle>
      <WindowButtons>
        <IconButton aria-label="Minimize"><Svg w={14}><path d="M0 7h14" stroke="#888" /></Svg></IconButton>
        <IconButton aria-label="Restore">
          <Svg w={14}><path d="M1 4h9v9H1zM4 4V1h9v9h-3" stroke="#888" strokeWidth="1.300" /></Svg>
        </IconButton>
        <IconButton aria-label="Close"><Svg w={14}><path d="M0 0l14 14M14 0L0 14" stroke="#888" strokeWidth="1.300" /></Svg></IconButton>
      </WindowButtons>
    </TitleBar>

    <TabStrip>
      <QuickAccess>
        <IconButton aria-label="Home">
          <Svg w={20}><path d="M10 0l10 9v11h-7v-6H7v6H0V9z" fill="#7a7a7a" /></Svg>
        </IconButton>
        <IconButton aria-label="Data Panel">
          <Svg w={20}>
            <path d="M0 0h6v6H0zM7 0h6v6H7zM14 0h6v6h-6zM0 7h6v6H0zM7 7h6v6H7zM14 7h6v6h-6zM0 14h6v6H0zM7 14h6v6H7zM14 14h6v6h-6z" fill="#7a7a7a" />
          </Svg>
        </IconButton>
        <IconButton aria-label="File">
          <Svg w={18} h={20}><path d="M0 0h11v7h7v13H0zM13 0l5 5h-5z" fill="#7a7a7a" /></Svg>
          <Caret w={9} />
        </IconButton>
        <IconButton aria-label="Save">
          <Svg w={20}>
            <path d="M0 0h20v20H0z" fill="#a0a0a0" />
            <path d="M5 0h10v8H5zM4 12h12v8H4z" fill="#d9d9d9" />
            <path d="M7 1h3v6H7zM6 14h8v1H6zM6 17h8v1H6z" fill="#a0a0a0" />
          </Svg>
        </IconButton>
        <IconButton aria-label="Undo" $gap={9}>
          <Svg w={18} h={16}>
            <path d="M3 6h5c6 0 9 3 9 9" stroke="#7a7a7a" strokeWidth="2.4" />
            <path d="M8 0v12L0 6z" fill="#7a7a7a" />
          </Svg>
          <Caret w={9} />
        </IconButton>
        <IconButton aria-label="Redo" $gap={9}>
          <Svg w={18} h={16}>
            <path d="M15 6h-5c-6 0-9 3-9 9" stroke="#a5a5a5" strokeWidth="2.4" />
            <path d="M10 0v12l8-6z" fill="#a5a5a5" />
          </Svg>
          <Caret w={9} color="#a5a5a5" />
        </IconButton>
      </QuickAccess>
      <DocumentTab>
        <DocumentName>
          <Svg w={20} h={21}>
            <path d="M10 0l10 5v11l-10 5-10-5V5z" fill="#ff7b1f" />
            <path d="M10 0l10 5-10 6L0 5z" fill="#ffc49a" />
            <path d="M0 5l10 6v10L0 16z" fill="#ff8f3f" />
          </Svg>
          Untitled
        </DocumentName>
        <IconButton aria-label="Close document">
          <Svg w={12}><path d="M1 1l10 10M11 1L1 11" stroke="#6e6e6e" strokeWidth="2" /></Svg>
        </IconButton>
      </DocumentTab>
      <Account>
        <IconButton aria-label="New tab">
          <Svg w={16}><path d="M8 0v16M0 8h16" stroke="#777" strokeWidth="2" /></Svg>
        </IconButton>
        <IconButton aria-label="Extensions">
          <Svg w={22}>
            <circle cx="11" cy="11" r="10.500" fill="#7c7c7c" />
            <path d="M4 17c-2-6 0-11 5-13l1 5 3-6 2 1-1 5 3-4 2 2-3 4 3 1c-1 3-4 4-7 3l-2 4c-2 0-4 0-6-2z" fill="#d9d9d9" />
            <path d="M6 15c-1-4 0-6 2-8l1 4 4 2-2 3z" fill="#7c7c7c" />
          </Svg>
        </IconButton>
        <IconButton aria-label="Job status">
          <Svg w={22}>
            <circle cx="11" cy="11" r="10" stroke="#7c7c7c" strokeWidth="1.500" />
            <circle cx="11" cy="11" r="7.500" fill="#7c7c7c" />
            <path d="M11 6v6h5" stroke="#e8e8e8" strokeWidth="2" />
          </Svg>
        </IconButton>
        <IconButton aria-label="Notifications">
          <Svg w={22}>
            <path d="M10 0h2v2c4 1 5 4 5 8 0 4 1 6 3 8H2c2-2 3-4 3-8 0-4 1-7 5-8zM8 19h6l-3 3z" fill="#7c7c7c" />
            <circle cx="22" cy="0" r="5.500" fill="#ff8d50" />
          </Svg>
        </IconButton>
        <IconButton aria-label="Help">
          <Svg w={22}>
            <circle cx="11" cy="11" r="10.500" fill="#7c7c7c" />
            <path d="M8 8c0-4 7-4 7 0 0 3-4 3-4 6" stroke="#e8e8e8" strokeWidth="2.400" />
            <path d="M10 15h2v3h-2z" fill="#e8e8e8" />
          </Svg>
        </IconButton>
        <Avatar aria-label="Account">MU</Avatar>
      </Account>
    </TabStrip>

    <Ribbon>
      <WorkspaceButton>
        DESIGN
        <Caret w={8} />
      </WorkspaceButton>
      <RibbonBody>
        <RibbonTabs>
          {ribbonTabs.map((t, i) => (
            <RibbonTab key={t} $active={i === 0}>{t}</RibbonTab>
          ))}
        </RibbonTabs>
        <Groups>
          {ribbonGroups.map((g) => (
            <Group key={g.label}>
              <Tools>
                {g.tools.map(([name, Icon]) => (
                  <Tool key={name} aria-label={name}><Icon /></Tool>
                ))}
              </Tools>
              <GroupLabel>
                {g.label}
                <Caret w={8} />
              </GroupLabel>
            </Group>
          ))}
        </Groups>
      </RibbonBody>
    </Ribbon>

    <Canvas>
      <Viewport />
      <ViewCube />
      <BrowserTree />
      <CreateDrawing />
      <CommentsPanel>
        <PanelTitle $indent={30}>COMMENTS</PanelTitle>
        <IconButton aria-label="Add comment">
          <Svg w={12}><path d="M6 0v12M0 6h12" stroke="#777" strokeWidth="2.500" /></Svg>
        </IconButton>
      </CommentsPanel>
      <NavBar>
        {navItems.map(([name, menu, icon]) => (
          <IconButton key={name} aria-label={name} $gap={4}>
            <Svg w={22}>{icon}</Svg>
            {menu && <Caret w={8} />}
          </IconButton>
        ))}
      </NavBar>
      <DocumentStatus>
        Untitled
        <Svg w={23} h={20}>
          <path d="M11.500 1L22 19H1z" fill="#fbdc16" stroke="#5e5a3a" strokeWidth="1.500" strokeLinejoin="round" />
          <path d="M10 6h3v7h-3zM10 15h3v2h-3z" fill="#222" />
        </Svg>
      </DocumentStatus>
    </Canvas>

    <Timeline>
      <Playback>
        {playback.map(([name, d]) => (
          <IconButton key={name} aria-label={name}>
            <Svg w={18}><path d={d} fill="#767676" /></Svg>
          </IconButton>
        ))}
      </Playback>
      <Features>
        <Svg w={104} h={36}>
          <path d="M4 9h14M2 11v14M4 27h8M20 11v8" stroke="#444" strokeWidth="1.500" />
          <path d="M0 7h4v4H0zM17 7h4v4h-4zM0 25h4v4H0z" fill="#2b8fe0" />
          <path d="M11 28l2-5 6-6 3 3-6 6z" fill="#f8a21c" />
          <path d="M18 18l2-1 3 3-2 1z" fill="#ee3b3b" />
          <path d="M32 27h14l6-5v3l-6 5H32z" fill="#b5b5b5" />
          <path d="M32 26V12l4-5h15v14l-5 5z" fill="#68b0e6" />
          <path d="M46 12l5-5v14l-5 5z" fill="#418fca" />
          <path d="M53 24V9" stroke="#333" strokeWidth="1.500" />
          <path d="M53 6l2 5h-4z" fill="#333" />
          <path d="M65 28V11l4-4h16v16l-5 5z" fill="#ddd" stroke="#666" strokeWidth="1.500" />
          <circle cx="74" cy="19" r="6.500" fill="white" stroke="#666" strokeWidth="1.500" />
          <path d="M73 14a5 5 0 1 0 6 6c-3 0-6-3-6-6z" fill="#60abe2" />
          <path d="M12 32v8h64v-8M44 32v8" stroke="#c2c2c2" strokeWidth="2" />
          <path d="M84-2h16v5l-6 6v32h-3V9l-7-6z" fill="#3a3a3a" />
        </Svg>
      </Features>
      <IconButton aria-label="Timeline settings"><Gear /></IconButton>
    </Timeline>
  </Page>
);

export default App;
